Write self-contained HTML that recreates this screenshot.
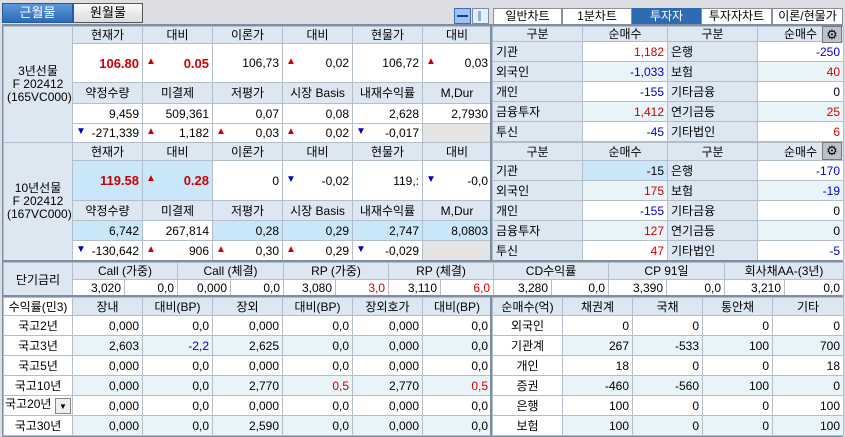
<!DOCTYPE html>
<html><head><meta charset="utf-8">
<style>
*{box-sizing:border-box;margin:0;padding:0}
body{width:845px;height:437px;background:#dcdee3;position:relative;overflow:hidden;font-family:"Liberation Sans","Noto Sans CJK KR",sans-serif;font-size:12px;color:#000}
table{position:absolute;border-collapse:collapse;table-layout:fixed;background:#fff}
td{border:1px solid #b3becb;padding:0 3px;white-space:nowrap;overflow:hidden;text-align:right;line-height:1}
td.h{background:#dce7f2;text-align:center}
td.l{background:#dce7f2;text-align:left}
td.c{text-align:center}
td.g{background:#e4e4e4}
td.s{background:#c9e7f9}
tr.a td{background:#e8f4f8}
tr.a td.l{background:#dce7f2}
.r{color:#d00000}.b{color:#0000c8}
.big{font-weight:bold;font-size:13px}
.u{float:left;color:#d00000;font-size:10px}
.d{float:left;color:#0000c0;font-size:10px}
.btn{position:absolute;top:3px;height:20px;border:1px solid #555;text-align:center;line-height:18px;font-size:13px}
.tab{position:absolute;top:8px;height:17px;border:1px solid #8a8f98;background:#fff;text-align:center;line-height:15px;font-size:12px}
.frame{position:absolute;border:2px solid #7d8da3}
</style></head><body>
<div class="btn" style="left:2px;width:71px;background:linear-gradient(#5a97d8,#2d6bb8);color:#fff;border-color:#2a5a98">근월물</div>
<div class="btn" style="left:73px;width:70px;background:linear-gradient(#fafafa,#dcdcdc)">원월물</div>
<div style="position:absolute;left:454px;top:8px;width:17px;height:16px;border:1px solid #3a6fb0;background:#9cc4ee"><div style="margin:6px 2px;height:2px;background:#1a3f80"></div></div>
<div style="position:absolute;left:472px;top:8px;width:17px;height:16px;border:1px solid #7a8ab0;background:#e8eef8"><div style="margin:2px 5px;width:3px;height:10px;background:#8fb0e0"></div></div>
<div class="tab" style="left:493px;width:69px">일반차트</div>
<div class="tab" style="left:562px;width:70px">1분차트</div>
<div class="tab" style="left:632px;width:69px;background:#2e6bb2;color:#fff;border-color:#2e6bb2">투자자</div>
<div class="tab" style="left:701px;width:71px">투자자차트</div>
<div class="tab" style="left:772px;width:71px">이론/현물가</div>

<div class="frame" style="left:2px;top:24px;width:841px;height:413px"></div>

<table style="left:3px;top:26px;width:488px">
<colgroup><col style="width:69px"><col style="width:70px"><col style="width:70px"><col style="width:70px"><col style="width:70px"><col style="width:70px"><col style="width:69px"></colgroup>
<tr style="height:17px"><td class="h" rowspan="5" style="line-height:13px">3년선물<br>F 202412<br>(165VC000)</td><td class="h">현재가</td><td class="h">대비</td><td class="h">이론가</td><td class="h">대비</td><td class="h">현물가</td><td class="h">대비</td></tr>
<tr style="height:39px"><td class="r big">106.80</td><td class="r big"><span class="u">▲</span>0.05</td><td>106,73</td><td><span class="u">▲</span>0,02</td><td>106,72</td><td><span class="u">▲</span>0,03</td></tr>
<tr style="height:21px"><td class="h">약정수량</td><td class="h">미결제</td><td class="h">저평가</td><td class="h">시장 Basis</td><td class="h">내재수익률</td><td class="h">M,Dur</td></tr>
<tr style="height:20px"><td>9,459</td><td>509,361</td><td>0,07</td><td>0,08</td><td>2,628</td><td>2,7930</td></tr>
<tr style="height:19px"><td><span class="d">▼</span>-271,339</td><td><span class="u">▲</span>1,182</td><td><span class="u">▲</span>0,03</td><td><span class="u">▲</span>0,02</td><td><span class="d">▼</span>-0,017</td><td class="g"></td></tr>
</table>

<table style="left:3px;top:142px;width:488px">
<colgroup><col style="width:69px"><col style="width:70px"><col style="width:70px"><col style="width:70px"><col style="width:70px"><col style="width:70px"><col style="width:69px"></colgroup>
<tr style="height:18px"><td class="h" rowspan="5" style="line-height:13px">10년선물<br>F 202412<br>(167VC000)</td><td class="h">현재가</td><td class="h">대비</td><td class="h">이론가</td><td class="h">대비</td><td class="h">현물가</td><td class="h">대비</td></tr>
<tr style="height:40px"><td class="r big s">119.58</td><td class="r big s"><span class="u">▲</span>0.28</td><td>0</td><td><span class="d">▼</span>-0,02</td><td>119,:</td><td><span class="d">▼</span>-0,0</td></tr>
<tr style="height:20px"><td class="h">약정수량</td><td class="h">미결제</td><td class="h">저평가</td><td class="h">시장 Basis</td><td class="h">내재수익률</td><td class="h">M,Dur</td></tr>
<tr style="height:20px"><td class="s">6,742</td><td>267,814</td><td class="s">0,28</td><td class="s">0,29</td><td class="s">2,747</td><td class="s">8,0803</td></tr>
<tr style="height:20px"><td><span class="d">▼</span>-130,642</td><td><span class="u">▲</span>906</td><td><span class="u">▲</span>0,30</td><td><span class="u">▲</span>0,29</td><td><span class="d">▼</span>-0,029</td><td class="g"></td></tr>
</table>

<table style="left:492px;top:26px;width:351px">
<colgroup><col style="width:90px"><col style="width:85px"><col style="width:90px"><col style="width:86px"></colgroup>
<tr style="height:15px"><td class="h">구분</td><td class="h">순매수</td><td class="h">구분</td><td class="h">순매수</td></tr>
<tr style="height:20px"><td class="l">기관</td><td class="r">1,182</td><td class="l">은행</td><td class="b">-250</td></tr>
<tr class="a" style="height:20px"><td class="l">외국인</td><td class="b">-1,033</td><td class="l">보험</td><td class="r">40</td></tr>
<tr style="height:20px"><td class="l">개인</td><td class="b">-155</td><td class="l">기타금융</td><td>0</td></tr>
<tr class="a" style="height:20px"><td class="l">금융투자</td><td class="r">1,412</td><td class="l">연기금등</td><td class="r">25</td></tr>
<tr style="height:20px"><td class="l">투신</td><td class="b">-45</td><td class="l">기타법인</td><td class="r">6</td></tr>
</table>
<div style="position:absolute;left:822px;top:26px;width:20px;height:17px;background:#bcc2ca;border:1px solid #777;text-align:center;line-height:15px;font-size:13px">⚙</div>

<table style="left:492px;top:142px;width:351px">
<colgroup><col style="width:90px"><col style="width:85px"><col style="width:90px"><col style="width:86px"></colgroup>
<tr style="height:18px"><td class="h">구분</td><td class="h">순매수</td><td class="h">구분</td><td class="h">순매수</td></tr>
<tr style="height:20px"><td class="l">기관</td><td class="s">-15</td><td class="l">은행</td><td class="b">-170</td></tr>
<tr class="a" style="height:20px"><td class="l">외국인</td><td class="r">175</td><td class="l">보험</td><td class="b">-19</td></tr>
<tr style="height:20px"><td class="l">개인</td><td class="b">-155</td><td class="l">기타금융</td><td>0</td></tr>
<tr class="a" style="height:20px"><td class="l">금융투자</td><td class="r">127</td><td class="l">연기금등</td><td>0</td></tr>
<tr style="height:20px"><td class="l">투신</td><td class="r">47</td><td class="l">기타법인</td><td class="b">-5</td></tr>
</table>
<div style="position:absolute;left:822px;top:142px;width:20px;height:18px;background:#bcc2ca;border:1px solid #777;text-align:center;line-height:16px;font-size:13px">⚙</div>

<div style="position:absolute;left:2px;top:260px;width:841px;height:2px;background:#7d8da3"></div>
<div style="position:absolute;left:490px;top:24px;width:2px;height:238px;background:#7d8da3"></div>

<table style="left:3px;top:262px;width:840px">
<colgroup><col style="width:69px"><col style="width:52px"><col style="width:53px"><col style="width:53px"><col style="width:53px"><col style="width:52px"><col style="width:53px"><col style="width:52px"><col style="width:53px"><col style="width:58px"><col style="width:57px"><col style="width:58px"><col style="width:58px"><col style="width:60px"><col style="width:59px"></colgroup>
<tr style="height:17px"><td class="h" rowspan="2">단기금리</td><td class="h" colspan="2">Call (가중)</td><td class="h" colspan="2">Call (체결)</td><td class="h" colspan="2">RP (가중)</td><td class="h" colspan="2">RP (체결)</td><td class="h" colspan="2">CD수익률</td><td class="h" colspan="2">CP 91일</td><td class="h" colspan="2">회사채AA-(3년)</td></tr>
<tr style="height:17px"><td>3,020</td><td>0,0</td><td>0,000</td><td>0,0</td><td>3,080</td><td class="r">3,0</td><td>3,110</td><td class="r">6,0</td><td>3,280</td><td>0,0</td><td>3,390</td><td>0,0</td><td>3,210</td><td>0,0</td></tr>
</table>
<div style="position:absolute;left:2px;top:295px;width:841px;height:2px;background:#7d8da3"></div>

<table style="left:3px;top:297px;width:488px">
<colgroup><col style="width:69px"><col style="width:70px"><col style="width:70px"><col style="width:70px"><col style="width:70px"><col style="width:70px"><col style="width:69px"></colgroup>
<tr style="height:18px"><td class="c" style="background:#fff;padding:0">수익률(민3)</td><td class="h">장내</td><td class="h">대비(BP)</td><td class="h">장외</td><td class="h">대비(BP)</td><td class="h">장외호가</td><td class="h">대비(BP)</td></tr>
<tr style="height:20px"><td class="c">국고2년</td><td>0,000</td><td>0,0</td><td>0,000</td><td>0,0</td><td>0,000</td><td>0,0</td></tr>
<tr class="a" style="height:20px"><td class="c" style="background:#fff">국고3년</td><td>2,603</td><td class="b">-2,2</td><td>2,625</td><td>0,0</td><td>0,000</td><td>0,0</td></tr>
<tr style="height:20px"><td class="c">국고5년</td><td>0,000</td><td>0,0</td><td>0,000</td><td>0,0</td><td>0,000</td><td>0,0</td></tr>
<tr class="a" style="height:20px"><td class="c" style="background:#fff">국고10년</td><td>0,000</td><td>0,0</td><td class="s">2,770</td><td class="r">0,5</td><td>2,770</td><td class="r">0,5</td></tr>
<tr style="height:20px"><td style="text-align:left;padding:0 1px">국고20년<span style="float:right;width:16px;height:16px;border:1px solid #888;background:#eee;font-size:8px;text-align:center;line-height:15px">▼</span></td><td>0,000</td><td>0,0</td><td>0,000</td><td>0,0</td><td>0,000</td><td>0,0</td></tr>
<tr class="a" style="height:20px"><td class="c" style="background:#fff">국고30년</td><td>0,000</td><td>0,0</td><td>2,590</td><td>0,0</td><td>0,000</td><td>0,0</td></tr>
</table>

<table style="left:492px;top:297px;width:351px">
<colgroup><col style="width:70px"><col style="width:70px"><col style="width:70px"><col style="width:70px"><col style="width:71px"></colgroup>
<tr style="height:18px"><td class="h">순매수(억)</td><td class="h">채권계</td><td class="h">국채</td><td class="h">통안채</td><td class="h">기타</td></tr>
<tr style="height:20px"><td class="c">외국인</td><td>0</td><td>0</td><td>0</td><td>0</td></tr>
<tr class="a" style="height:20px"><td class="c" style="background:#fff">기관계</td><td>267</td><td>-533</td><td>100</td><td>700</td></tr>
<tr style="height:20px"><td class="c">개인</td><td>18</td><td>0</td><td>0</td><td>18</td></tr>
<tr class="a" style="height:20px"><td class="c" style="background:#fff">증권</td><td>-460</td><td>-560</td><td>100</td><td>0</td></tr>
<tr style="height:20px"><td class="c">은행</td><td>100</td><td>0</td><td>0</td><td>100</td></tr>
<tr class="a" style="height:20px"><td class="c" style="background:#fff">보험</td><td>100</td><td>0</td><td>0</td><td>100</td></tr>
</table>
<div style="position:absolute;left:490px;top:297px;width:2px;height:140px;background:#7d8da3"></div>
</body></html>
